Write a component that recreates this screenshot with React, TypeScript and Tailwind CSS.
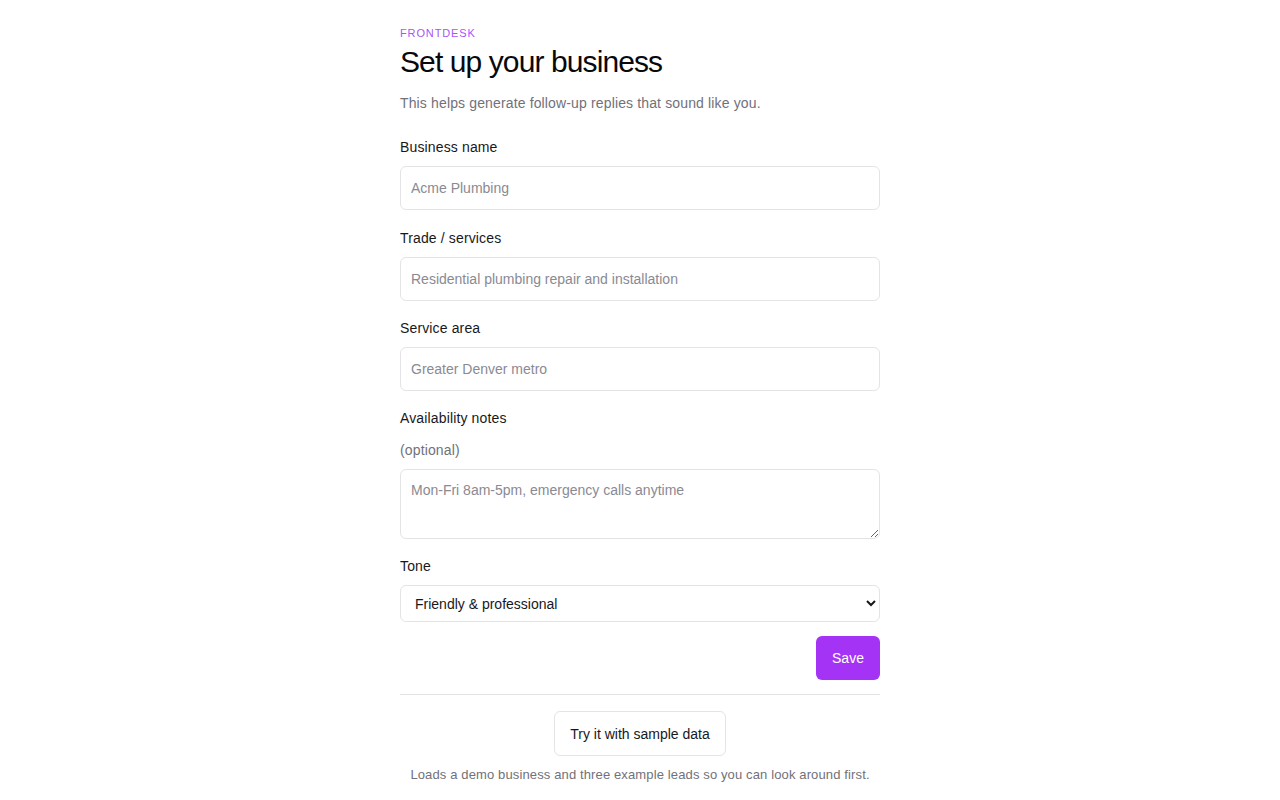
import { useState } from "react";

const font = { fontFamily: "'Liberation Sans', Arial, sans-serif" };

const Field = ({
  label,
  placeholder,
  value,
  onChange,
}: {
  label: string;
  placeholder: string;
  value: string;
  onChange: (v: string) => void;
}) => (
  <div className="flex flex-col">
    <label className="pt-px mb-[9px] text-sm leading-5 tracking-[0.01em] text-[#18181b]">{label}</label>
    <input
      type="text"
      value={value}
      placeholder={placeholder}
      onChange={(e) => onChange(e.target.value)}
      className="h-11 w-full rounded-md border border-[#e4e4e7] bg-white px-2.5 text-sm text-[#18181b] placeholder:text-[#8a8a93] outline-none"
    />
  </div>
);

const App = () => {
  const [name, setName] = useState("");
  const [trade, setTrade] = useState("");
  const [area, setArea] = useState("");
  const [notes, setNotes] = useState("");
  const [tone, setTone] = useState("friendly");

  return (
    <div className="min-h-screen bg-white" style={font}>
      <div className="mx-auto w-[480px] pt-[26px]">
        <div className="text-[11px] leading-[14px] uppercase tracking-[0.08em] text-[#a855f7]">
          Frontdesk
        </div>
        <h1 className="mt-[4px] text-[30px] leading-9 tracking-[-0.03em] text-[#09090b]">
          Set up your business
        </h1>
        <p className="mt-[13px] text-sm leading-5 tracking-[0.01em] text-[#71717a]">
          This helps generate follow-up replies that sound like you.
        </p>

        <div className="mt-[23px] flex flex-col gap-[16.5px]">
          <Field label="Business name" placeholder="Acme Plumbing" value={name} onChange={setName} />
          <Field
            label="Trade / services"
            placeholder="Residential plumbing repair and installation"
            value={trade}
            onChange={setTrade}
          />
          <Field label="Service area" placeholder="Greater Denver metro" value={area} onChange={setArea} />

          <div className="-mt-px flex flex-col">
            <label className="pt-px text-sm leading-5 tracking-[0.01em] text-[#18181b]">Availability notes</label>
            <span className="mt-3 text-sm leading-5 tracking-[0.01em] text-[#71717a]">(optional)</span>
            <textarea
              value={notes}
              onChange={(e) => setNotes(e.target.value)}
              placeholder="Mon-Fri 8am-5pm, emergency calls anytime"
              className="mt-[9px] h-[70px] w-full rounded-md border border-[#e4e4e7] bg-white px-2.5 py-2.5 text-sm leading-5 text-[#18181b] placeholder:text-[#8a8a93] outline-none"
            />
          </div>

          <div className="flex flex-col">
            <label className="pt-px mb-[9px] text-sm leading-5 tracking-[0.01em] text-[#18181b]">Tone</label>
            <select
              value={tone}
              onChange={(e) => setTone(e.target.value)}
              className="h-[37px] w-full rounded-md border border-[#e4e4e7] bg-white px-2.5 text-sm text-[#18181b] outline-none"
            >
              <option value="friendly">Friendly &amp; professional</option>
              <option value="casual">Casual</option>
              <option value="formal">Formal</option>
            </select>
          </div>
        </div>

        <div className="mt-[14px] flex justify-end">
          <button className="h-11 w-16 rounded-md bg-[#a533f5] text-sm text-white">Save</button>
        </div>

        <div className="mt-[14px] border-t border-[#e4e4e7] pt-4 flex flex-col items-center">
          <button className="h-[45px] rounded-md border border-[#e4e4e7] bg-white px-[15px] text-sm text-[#18181b]">
            Try it with sample data
          </button>
          <p className="mt-[9px] text-[13px] leading-5 tracking-[0.01em] text-[#71717a]">
            Loads a demo business and three example leads so you can look around first.
          </p>
        </div>
      </div>
    </div>
  );
};

export default App;
